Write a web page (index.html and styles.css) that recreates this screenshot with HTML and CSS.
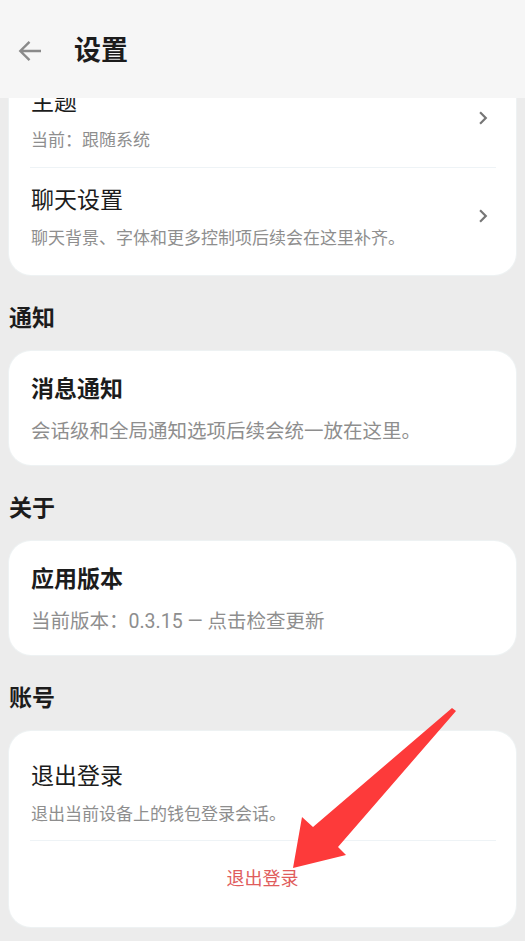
FILE: index.html
```html
<!DOCTYPE html>
<html lang="zh-CN">
<head>
<meta charset="utf-8">
<title>设置</title>
<link rel="stylesheet" href="styles.css">
</head>
<body>
<header class="appbar">
  <svg class="back-icon" viewBox="0 0 24 22" width="24" height="22" aria-hidden="true">
    <path d="M23 11H2.5M11.5 1.8L2.3 11l9.2 9.2" fill="none" stroke="currentColor" stroke-width="2.4" stroke-linecap="butt" stroke-linejoin="miter"/>
  </svg>
  <h1 class="appbar-title">设置</h1>
</header>

<main class="content">
  <section class="card card-nav">
    <div class="row">
      <div class="row-text">
        <div class="row-title">主题</div>
        <div class="row-sub">当前：跟随系统</div>
      </div>
      <svg class="chev" viewBox="0 0 24 24" width="26" height="26" aria-hidden="true"><path d="M10 6L8.59 7.41 13.17 12l-4.58 4.59L10 18l6-6z" fill="currentColor"/></svg>
    </div>
    <div class="divider"></div>
    <div class="row">
      <div class="row-text">
        <div class="row-title">聊天设置</div>
        <div class="row-sub">聊天背景、字体和更多控制项后续会在这里补齐。</div>
      </div>
      <svg class="chev" viewBox="0 0 24 24" width="26" height="26" aria-hidden="true"><path d="M10 6L8.59 7.41 13.17 12l-4.58 4.59L10 18l6-6z" fill="currentColor"/></svg>
    </div>
  </section>

  <h2 class="section-label">通知</h2>
  <section class="card card-info">
    <div class="info-title">消息通知</div>
    <div class="info-sub">会话级和全局通知选项后续会统一放在这里。</div>
  </section>

  <h2 class="section-label">关于</h2>
  <section class="card card-info">
    <div class="info-title">应用版本</div>
    <div class="info-sub">当前版本：0.3.15 — 点击检查更新</div>
  </section>

  <h2 class="section-label">账号</h2>
  <section class="card card-account">
    <div class="acct-body">
      <div class="row-title">退出登录</div>
      <div class="row-sub">退出当前设备上的钱包登录会话。</div>
    </div>
    <div class="divider"></div>
    <div class="acct-action">
      <button class="logout-btn" type="button">退出登录</button>
    </div>
  </section>
</main>

<svg class="annotation" viewBox="0 0 525 941" width="525" height="941" aria-hidden="true">
  <polygon points="452,708 456,711 338,847 346,855 293,868 302,817 313,827" fill="#fd3a3a"/>
</svg>
</body>
</html>
```

FILE: styles.css
```css
* {
  box-sizing: border-box;
}

html, body {
  margin: 0;
  padding: 0;
}

body {
  width: 525px;
  height: 941px;
  overflow: hidden;
  position: relative;
  background: #ececec;
  font-family: Roboto, "Noto Sans CJK SC", "Noto Sans", sans-serif;
  color: #1c1c1c;
}

.appbar {
  position: fixed;
  top: 0;
  left: 0;
  right: 0;
  height: 98px;
  background: #f6f6f6;
  display: flex;
  align-items: center;
  padding-top: 3px;
  padding-left: 18px;
  gap: 32px;
  z-index: 10;
}

.back-icon {
  color: #8a8a8a;
  display: block;
  flex: none;
}

.appbar-title {
  margin: 0;
  font-size: 27px;
  line-height: 36px;
  font-weight: 700;
  color: #1c1c1c;
}

.content {
  padding: 60px 9px 0;
}

.card {
  background: #ffffff;
  border-radius: 22px;
  box-shadow: 0 0 0 1px #eef2f3;
}

.card-nav {
  padding: 10px 0;
}

.row {
  display: flex;
  align-items: center;
  padding: 18px 20px 15px 22px;
}

.row-text {
  flex: 1;
  min-width: 0;
}

.row-title {
  font-size: 23px;
  line-height: 30px;
  font-weight: 400;
  color: #1c1c1c;
}

.row-sub {
  margin-top: 10px;
  font-size: 17px;
  line-height: 24px;
  color: #8e8e8e;
}

.chev {
  flex: none;
  color: #767676;
  margin-bottom: 4px;
}

.divider {
  height: 1px;
  background: #eef3f6;
  margin: 0 20px 0 21px;
}

.section-label {
  margin: 29px 0 17px;
  font-size: 23px;
  line-height: 30px;
  font-weight: 700;
  color: #1c1c1c;
}

.card-info {
  padding: 24px 22px 20px;
}

.info-title {
  font-size: 23px;
  line-height: 30px;
  font-weight: 700;
  color: #1c1c1c;
}

.info-sub {
  margin-top: 14px;
  font-size: 19.5px;
  line-height: 26px;
  color: #8e8e8e;
}

.acct-body {
  padding: 31px 22px 14px;
}

.acct-action {
  display: flex;
  justify-content: center;
  padding: 25px 0 35px;
}

.logout-btn {
  border: none;
  background: none;
  padding: 0;
  font-family: inherit;
  font-size: 18px;
  line-height: 26px;
  color: #e05c5c;
}

.annotation {
  position: absolute;
  top: 0;
  left: 0;
  pointer-events: none;
  z-index: 20;
}
```
